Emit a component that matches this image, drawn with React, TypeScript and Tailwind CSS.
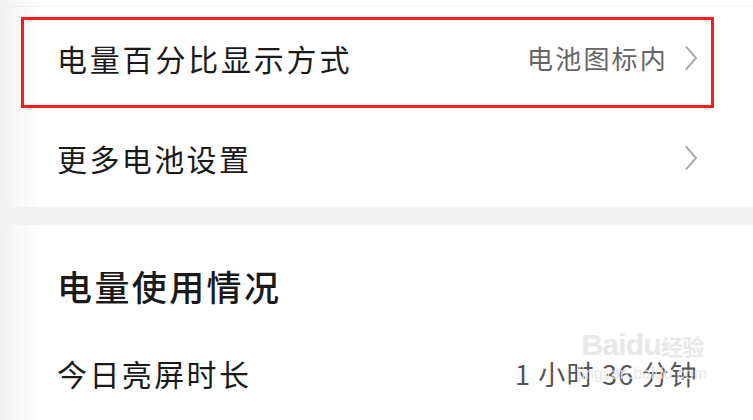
import React from 'react';

const font = { fontFamily: '"Noto Sans CJK SC", "Noto Sans", sans-serif' };

function Chevron() {
  return (
    <svg width="14" height="26" viewBox="0 0 14 26" fill="none" className="shrink-0">
      <polyline points="2,1.5 12,13 2,24.5" stroke="#ababab" strokeWidth="2" strokeLinejoin="miter" />
    </svg>
  );
}

export default function App() {
  return (
    <div
      className="w-[753px] h-[420px] overflow-hidden relative bg-[linear-gradient(to_right,#f2f2f2,#ffffff_42px)] text-[#1a1a1a]"
      style={font}
    >
      <div className="h-[7px] border-b border-[#efefef]" />

      <div className="h-[10px]" />
      {/* highlighted row */}
      <div className="ml-[21px] mr-[39px] h-[91px] border-[3px] border-[#ff1a1a] flex items-center pl-[33px] pr-[13px] pb-[9px]">
        <span className="text-[30px] tracking-[2.8px] leading-none">电量百分比显示方式</span>
        <span className="ml-auto text-[26px] tracking-[2.2px] text-[#666] leading-none mr-[16px]">电池图标内</span>
        <Chevron />
      </div>

      <div className="h-[99px] flex items-center pl-[57px] pr-[55px]">
        <span className="text-[30px] tracking-[2.4px] leading-none">更多电池设置</span>
        <span className="ml-auto" />
        <Chevron />
      </div>

      <div className="h-[18px] ml-[4px] bg-[#f2f2f2]" />

      <div className="h-[122px] flex items-center pl-[57px] pb-[2px]">
        <span className="text-[35px] tracking-[2.4px] font-medium leading-none">电量使用情况</span>
      </div>

      <div className="h-[56px] flex items-center pl-[57px] pr-[55px] pb-[4px]">
        <span className="text-[30px] tracking-[2.4px] leading-none">今日亮屏时长</span>
        <span className="ml-auto text-[27px] tracking-[1.2px] text-[#555] leading-none whitespace-pre">1 小时 36 分钟</span>
      </div>

      <div className="absolute left-[578px] top-[330px] flex flex-col items-center text-[#e6e6e6] opacity-90 pointer-events-none" style={{ fontFamily: '"Liberation Sans", Arial, sans-serif' }}>
        <div className="text-[30px] font-bold leading-none tracking-tight">Baidu<span className="text-[22px]" style={font}>经验</span></div>
        <div className="text-[16px] leading-none mt-[6px]">jingyan.baidu.com</div>
      </div>
    </div>
  );
}
